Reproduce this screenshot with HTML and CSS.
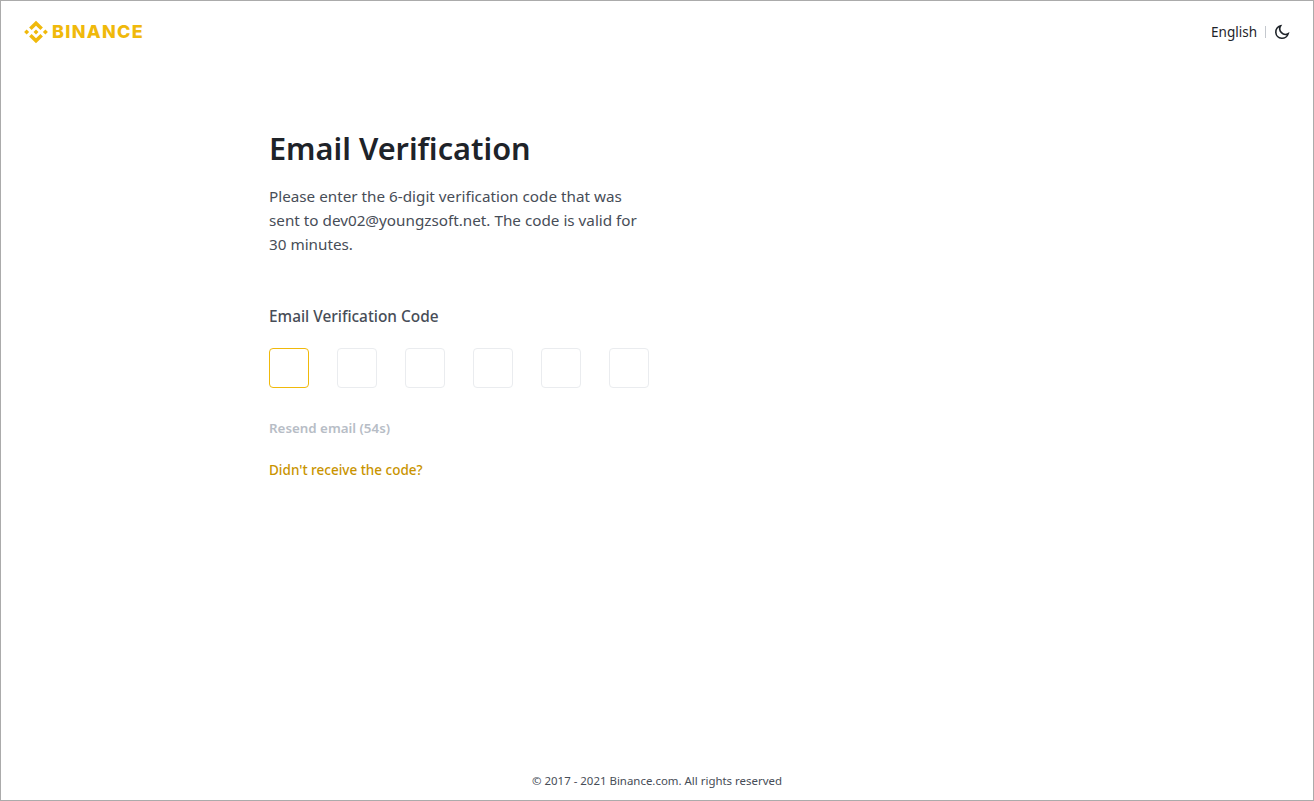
FILE: index.html
```html
<!DOCTYPE html>
<html lang="en">
<head>
<meta charset="utf-8">
<title>Email Verification</title>
<link rel="stylesheet" href="styles.css">
</head>
<body>
<div class="frame">
  <header class="header">
    <div class="brand">
      <svg class="logo" viewBox="0 0 24 24" aria-hidden="true">
        <path d="M12 9.5 14.5 12 12 14.5 9.5 12Z"/>
        <path d="M7.6 10.1 12 5.7l4.4 4.4 2.5-2.5L12 .7 5.1 7.6Z"/>
        <path d="M7.6 13.9 12 18.3l4.4-4.4 2.5 2.5L12 23.3l-6.9-6.9Z"/>
        <path d="M2.6 9.5 5.1 12l-2.5 2.5L.1 12Z"/>
        <path d="M21.4 9.5 23.9 12l-2.5 2.5-2.5-2.5Z"/>
      </svg>
      <span class="wordmark">BINANCE</span>
    </div>
    <div class="tools">
      <span class="lang">English</span>
      <span class="sep"></span>
      <svg class="moon" viewBox="0 0 16 16" aria-hidden="true">
        <path d="M6.6 1.9A6.3 6.3 0 1 0 14.2 9.6 5.6 5.6 0 0 1 6.6 1.9Z"/>
      </svg>
    </div>
  </header>
  <main class="main">
    <h1 class="title">Email Verification</h1>
    <p class="desc">Please enter the 6-digit verification code that was sent to dev02@youngzsoft.net. The code is valid for 30 minutes.</p>
    <div class="label">Email Verification Code</div>
    <div class="codes">
      <div class="code active"></div>
      <div class="code"></div>
      <div class="code"></div>
      <div class="code"></div>
      <div class="code"></div>
      <div class="code"></div>
    </div>
    <div class="resend">Resend email (54s)</div>
    <a class="help" href="#">Didn't receive the code?</a>
  </main>
  <footer class="footer">© 2017 - 2021 Binance.com. All rights reserved</footer>
</div>
</body>
</html>
```
FILE: styles.css
```css
* { box-sizing: border-box; }
html, body { margin: 0; height: 100%; }
body {
  background: #fff;
  font-family: "Noto Sans", "Liberation Sans", sans-serif;
  color: #1e2329;
  overflow: hidden;
}
.frame {
  height: 801px;
  border: 1px solid #ababab;
  display: flex;
  flex-direction: column;
}
.header {
  height: 62px;
  padding: 0 23px 0 23px;
  display: flex;
  align-items: center;
  justify-content: space-between;
  flex: none;
}
.brand { display: flex; align-items: center; gap: 4px; }
.logo { width: 24px; height: 24px; fill: #f0b90b; display: block; }
.wordmark {
  font-family: "Inter", "Liberation Sans", sans-serif;
  font-size: 18px;
  font-weight: 800;
  letter-spacing: 1.3px;
  color: #f0b90b;
  line-height: 24px;
}
.tools { display: flex; align-items: center; }
.lang { font-size: 13.5px; line-height: 20px; color: #1e2329; }
.sep { width: 1px; height: 12px; background: #c4c8ce; margin: 0 8px; }
.moon { width: 16px; height: 16px; fill: none; stroke: #1e2329; stroke-width: 1.6; display: block; }
.main {
  flex: 1;
  margin-left: 268px;
  width: 380px;
  padding-top: 63px;
}
.title {
  margin: 0;
  font-size: 30.7px;
  line-height: 44px;
  font-weight: 600;
  color: #1e2329;
}
.desc {
  margin: 14px 0 0;
  font-size: 15.25px;
  line-height: 24px;
  color: #474d57;
}
.label {
  margin-top: 49px;
  font-size: 15.4px;
  line-height: 24px;
  font-weight: 500;
  color: #474d57;
}
.codes { display: flex; gap: 28px; margin-top: 19px; }
.code {
  width: 40px;
  height: 40px;
  border: 1px solid #eaecef;
  border-radius: 4px;
}
.code.active { border-color: #f0b90b; }
.resend {
  margin-top: 30px;
  font-size: 13.35px;
  line-height: 20px;
  font-weight: 600;
  color: #b7bdc6;
}
.help {
  display: block;
  margin-top: 22px;
  font-size: 13.5px;
  line-height: 20px;
  font-weight: 500;
  color: #c99400;
  text-decoration: none;
}
.footer {
  flex: none;
  height: 38px;
  text-align: center;
  font-size: 11.45px;
  line-height: 16px;
  padding-top: 11px;
  color: #474d57;
}
```
